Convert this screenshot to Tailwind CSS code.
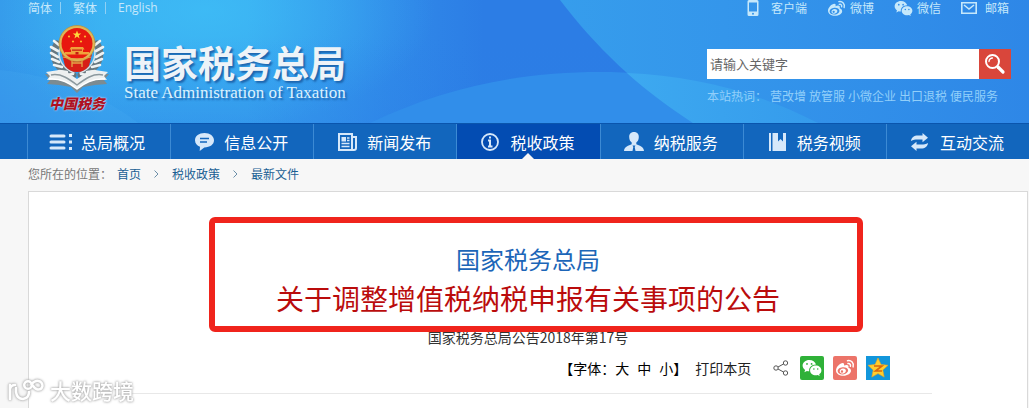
<!DOCTYPE html>
<html lang="zh-CN">
<head>
  <meta charset="UTF-8" />
  <meta name="viewport" content="width=device-width, initial-scale=1.0" />
  <title>国家税务总局</title>
  <script src="https://cdn.jsdelivr.net/npm/@tailwindcss/browser@4"></script>
</head>
<body class="flex min-h-screen flex-col bg-[#f7f7f7] font-['Noto_Sans_CJK_SC',sans-serif] text-xs text-[#333]">

  <!-- shared icon shapes -->
  <svg class="hidden" aria-hidden="true">
    <symbol id="wechat" viewBox="0 0 20 18">
      <path fill="currentColor" fill-rule="evenodd" d="M7.3 1C3.5 1 .6 3.500.6 6.600c0 1.800 1 3.300 2.500 4.400l-.7 2.200 2.500-1.300c.7.200 1.500.300 2.300.300-.6-3.700 2.600-6.700 6.800-6.600C13.300 3 10.600 1 7.300 1zM5 4a.9.9 0 1 1 0 1.800A.9.9 0 0 1 5 4zm4.600 0a.9.9 0 1 1 0 1.800.9.9 0 0 1 0-1.800z" />
      <path fill="currentColor" fill-rule="evenodd" d="M13.800 6.600c-3.200 0-5.700 2.100-5.700 4.800s2.500 4.800 5.700 4.800c.7 0 1.300-.1 1.900-.3l2 1.100-.5-1.800c1.300-.9 2.200-2.200 2.200-3.800 0-2.700-2.500-4.800-5.600-4.800zm-1.900 2.600a.8.8 0 1 1 0 1.600.8.8 0 0 1 0-1.600zm3.800 0a.8.8 0 1 1 0 1.600.8.8 0 0 1 0-1.600z" />
    </symbol>
    <symbol id="weibo" viewBox="0 0 20 18">
      <path fill="currentColor" fill-rule="evenodd" d="M13.400 8.700c.5-1.700-.1-2.900-2-2.800-.8 0-1.600.3-2.400.6.4-1.600 0-2.500-1.300-2.500C5 4 1 8 1 11.500 1 14.800 4.600 16.800 8.300 16.800c4.400 0 7.700-2.500 7.700-5 0-1.600-1.100-2.700-2.600-3.100zM8 15.400c-2.900.2-5.200-1.100-5.300-3.100-.2-1.900 2-3.800 4.900-4 2.900-.3 5.300 1.100 5.500 3 .1 2-2.200 3.900-5.100 4.100z" />
      <path fill="currentColor" fill-rule="evenodd" d="M8 9.500c-1.900.1-3.500 1.500-3.300 3.100.1 1.300 1.500 2.200 3.200 2 1.800-.2 3.200-1.600 3-3.100-.2-1.200-1.300-2.100-2.900-2zm-1 4.200a1.200 1.200 0 1 1 0-2.400 1.200 1.200 0 0 1 0 2.400z" />
      <path fill="none" stroke="currentColor" stroke-width="1.500" stroke-linecap="round" d="M12.500 1.700c3.800-.8 6.700 2.500 5.600 6.200M13 4.600c1.800-.4 2.900 1 2.400 2.600" />
    </symbol>
  </svg>

  <header class="relative h-[123px] overflow-hidden pr-[18px] pl-[28px]">
    <svg class="absolute inset-0 h-full w-full" viewBox="0 0 1029 123" preserveAspectRatio="none" aria-hidden="true">
      <defs>
        <linearGradient id="sky" x1="0" x2="1" y1="0" y2="0">
          <stop offset="0" stop-color="#3599ea" />
          <stop offset=".1" stop-color="#38a9ef" />
          <stop offset=".24" stop-color="#38a6ef" />
          <stop offset=".38" stop-color="#308ae9" />
          <stop offset=".47" stop-color="#2c7de5" />
          <stop offset="1" stop-color="#2c7de5" />
        </linearGradient>
        <radialGradient id="glow">
          <stop offset="0" stop-color="#40c4f8" stop-opacity=".65" />
          <stop offset="1" stop-color="#40c4f8" stop-opacity="0" />
        </radialGradient>
        <linearGradient id="shade" x1="0" x2="0" y1="0" y2="1">
          <stop offset=".3" stop-color="#2b7ee6" stop-opacity="0" />
          <stop offset="1" stop-color="#2b7ee6" stop-opacity=".35" />
        </linearGradient>
        <linearGradient id="wing" x1="0" x2="1" y1="0" y2="0">
          <stop offset="0" stop-color="#369dec" />
          <stop offset=".35" stop-color="#3496eb" />
          <stop offset="1" stop-color="#2e87e7" />
        </linearGradient>
        <linearGradient id="hill" x1="0" x2="1" y1="0" y2="0">
          <stop offset="0" stop-color="#3da9f0" />
          <stop offset="1" stop-color="#359bec" />
        </linearGradient>
      </defs>
      <path fill="url(#sky)" d="M0 0h1029v123H0z" />
      <ellipse fill="url(#glow)" cx="205" cy="10" rx="230" ry="120" />
      <path fill="url(#shade)" d="M0 0h1029v123H0z" />
      <path fill="#4db4f2" fill-opacity=".18" d="M0 70c50 5 98 22 138 53H0z" />
      <path fill="#318eea" d="M370 123c75-36 150-51 230-51 80 0 150 15 218 51z" />
      <path fill="url(#wing)" d="M560 0c35 46 78 88 133 123h336V0z" />
      <path fill="url(#hill)" d="M627 73c66 3 129 18 191 50H693c-24-16-46-32-66-50z" />
    </svg>

    <div class="relative flex h-4 items-center justify-between pr-0.5 leading-4 text-[#c5e8fb]">
      <nav class="flex items-center" aria-label="语言">
        <a href="#">简体</a>
        <span class="mx-2 h-3 w-px bg-[#8fd0f5]"></span>
        <a class="ml-1" href="#">繁体</a>
        <span class="mx-2 h-3 w-px bg-[#8fd0f5]"></span>
        <a class="ml-1 font-['Open_Sans',sans-serif]" href="#">English</a>
      </nav>
      <nav class="flex items-center gap-5" aria-label="快捷入口">
        <a class="flex items-center gap-3" href="#">
          <svg class="h-4 w-3" viewBox="0 0 12 16" aria-hidden="true"><path fill="currentColor" fill-rule="evenodd" d="M2 0h8q1.500 0 1.500 1.500v13q0 1.500-1.500 1.500H2Q.5 16 .5 14.500v-13Q.5 0 2 0zm0 2.500v9h8v-9zM6 12.800a1 1 0 1 0 0 2 1 1 0 0 0 0-2z" /></svg>
          客户端
        </a>
        <a class="flex items-center gap-1" href="#"><svg class="h-[17px] w-[19px]"><use href="#weibo" /></svg>微博</a>
        <a class="flex items-center gap-1" href="#"><svg class="h-[17px] w-[19px]"><use href="#wechat" /></svg>微信</a>
        <a class="flex items-center gap-2" href="#">
          <svg class="h-3 w-4" viewBox="0 0 16 12" fill="none" stroke="currentColor" stroke-width="1.600" aria-hidden="true"><path d="M.8.8h14.400v10.400H.8zM3 3l5 4 5-4" /></svg>
          邮箱
        </a>
      </nav>
    </div>

    <div class="relative flex items-start justify-between">
      <a class="flex pl-[17px]" href="#">
        <span class="mt-2 flex w-16 flex-col items-center">
          <svg class="h-[69px] w-16" viewBox="0 0 64 69" aria-hidden="true">
            <!-- wheat ears -->
            <g fill="none" stroke-linecap="round">
              <path stroke="#66777f" stroke-width="7" d="M12 20C5 32 11 45 28 51M52 20c7 12 1 25-16 31" />
              <path stroke="#eef2f3" stroke-width="2.600" d="M9 17l5 4M6 23l7 4M6 29l7 4M7 35l7 3M9 41l8 2M14 47l8 1M21 51l7-1M55 17l-5 4M58 23l-7 4M58 29l-7 4M57 35l-7 3M55 41l-8 2M50 47l-8 1M43 51l-7-1" />
              <path stroke="#dbe2e4" stroke-width="1.400" d="M15 24c-3 10 2 20 14 25M49 24c3 10-2 20-14 25" />
            </g>
            <path fill="#d71f17" d="M17 30h30l-3 12q-5 6-12 6t-12-6z" />
            <circle cx="32" cy="19.500" r="18" fill="#e0b755" stroke="#b68c3a" stroke-width=".7" />
            <circle cx="32" cy="19.500" r="15.500" fill="#e8180f" />
            <path fill="#ffd83c" d="M32 6.500l1.100 3h3.100l-2.500 1.900.9 3-2.600-1.800-2.600 1.800.9-3-2.500-1.900h3.100z" />
            <g fill="#ffb52e">
              <circle cx="24" cy="12.500" r="1.100" /><circle cx="40" cy="12.500" r="1.100" />
              <circle cx="28" cy="17.500" r="1.100" /><circle cx="36" cy="17.500" r="1.100" />
            </g>
            <path fill="#f1a13b" d="M26 23h12l1.500 2.500H38V28h6v2.500H20V28h6v-2.500h-1.500z" />
            <path fill="#c51d13" d="M27 25.500h10v1.200H27zM30.500 28h3v2.500h-3z" />
            <path fill="none" stroke="#e2a648" stroke-width="1.300" d="M18 33q14 4 28 0M27 35v8M37 35v8M27 39h10" />
            <!-- silver ribbon -->
            <path fill="#7c8b91" d="M0 50l12 0 20 9 20-9h12l-5 6 3 4-12 1-12 2-6 6-6-6-12-2-12-1 3-4z" />
            <path fill="#edf0f0" d="M1 48l13-2c6 0 12 5 18 9 6-4 12-9 18-9l13 2-4 4 3 4c-12-2-21 2-30 9-9-7-18-11-30-9l3-4z" />
            <path fill="none" stroke="#8c999e" stroke-width="1.500" d="M6 51c10-2 18 4 26 10 8-6 16-12 26-10" />
            <path fill="none" stroke="#fff" stroke-width="1.500" d="M4 55c12-1 21 4 28 10 7-6 16-11 28-10" />
          </svg>
          <span class="text-sm leading-5 font-black text-[#ad1022] italic [text-shadow:0_0_2px_#ffffff]">中国税务</span>
        </span>
        <span class="mt-[25px] ml-[15px] flex flex-col [text-shadow:2px_2px_2px_#1d65ae]">
          <span class="text-[37px] leading-[42px] font-bold text-[#edf3f8]">国家税务总局</span>
          <span class="font-['Liberation_Serif',serif] text-[17px] leading-5 text-[#dcf1fd]">State Administration of Taxation</span>
        </span>
      </a>

      <div class="mt-[33px] w-[304px]">
        <form class="flex h-[30px]" onsubmit="return false">
          <input id="keyword" type="text" aria-label="关键字" placeholder="请输入关键字" class="min-w-0 flex-1 bg-white px-[3px] text-[13px] text-[#333] outline-none placeholder:text-[#666]" />
          <button type="submit" aria-label="搜索" class="flex w-8 items-center justify-center bg-[#d9463b]">
            <svg class="h-[22px] w-[22px]" viewBox="0 0 22 22" fill="none" stroke="#fff" stroke-linecap="round" aria-hidden="true">
              <circle cx="8.500" cy="8.500" r="6.500" stroke-width="2" />
              <path stroke-width="1.300" d="M5 8.500A3.500 3.500 0 0 1 8.500 5" />
              <path stroke-width="3.200" d="M14 14l5 5" />
            </svg>
          </button>
        </form>
        <p class="mt-2 flex gap-[3px] leading-[18px] whitespace-nowrap text-[#91cffa]">
          <span>本站热词：</span>
          <a href="#">营改增</a><a href="#">放管服</a><a href="#">小微企业</a><a href="#">出口退税</a><a href="#">便民服务</a>
        </p>
      </div>
    </div>
  </header>

  <nav class="flex h-9 border-t border-[#0a55ad] bg-[#1266bd] pl-[27px] text-base text-white" aria-label="主导航">
    <a class="flex flex-1 items-center justify-center gap-2 border-l border-[#3c8ad4] pr-1 whitespace-nowrap" href="#">
      <svg class="h-5 w-6" viewBox="0 0 24 20" aria-hidden="true"><path fill="none" stroke="#d6e8fa" stroke-width="3" stroke-linecap="round" d="M2 4h13M2 10h13M2 16h13" /><path fill="#d6e8fa" d="M20 2h3v3h-3zM20 8.500h3v3h-3zM20 15h3v3h-3z" /></svg>
      总局概况
    </a>
    <a class="flex flex-1 items-center justify-center gap-2 border-l border-[#3c8ad4] pr-1 whitespace-nowrap" href="#">
      <svg class="h-5 w-6" viewBox="0 0 24 20" aria-hidden="true"><path fill="#d6e8fa" d="M12.500 1C7 1 3 4 3 8.300c0 3 2 5.400 5 6.500l-.3 4.200 4.600-3.600C18 15.400 22 12.500 22 8.300S18 1 12.500 1z" /><path stroke="#1266bd" stroke-width="1.300" d="M8 6.500h9M8 10h7" /></svg>
      信息公开
    </a>
    <a class="flex flex-1 items-center justify-center gap-2 border-l border-[#3c8ad4] pr-1 whitespace-nowrap" href="#">
      <svg class="h-5 w-6" viewBox="0 0 24 20" fill="none" stroke="#d6e8fa" stroke-width="2" aria-hidden="true"><path d="M4 2h13v16H4zM17 5h4v11q0 2-2 2h-3" /><path stroke-width="1.500" d="M6.500 11.500h8M6.500 14.500h8M12 6h2.500M12 8.500h2.500" /><path fill="#d6e8fa" stroke="none" d="M6.500 5H11v4.500H6.500z" /></svg>
      新闻发布
    </a>
    <a class="relative flex flex-1 items-center justify-center gap-2 border-l border-[#3c8ad4] bg-[#034cb2] pr-1 whitespace-nowrap" href="#" aria-current="page">
      <svg class="h-5 w-6" viewBox="0 0 24 20" fill="none" stroke="#d6e8fa" aria-hidden="true"><circle cx="12" cy="10" r="8" stroke-width="1.800" /><path stroke-width="2" d="M12 4.500v2M10 8.500h2V14M10 14.500h4.500" /></svg>
      税收政策
      <svg class="absolute bottom-0 left-1/2 h-1.5 w-3 -translate-x-1/2" viewBox="0 0 12 6" aria-hidden="true"><path fill="#f7f7f7" d="M6 0l6 6H0z" /></svg>
    </a>
    <a class="flex flex-1 items-center justify-center gap-2 border-l border-[#3c8ad4] pr-1 whitespace-nowrap" href="#">
      <svg class="h-5 w-6" viewBox="0 0 24 20" aria-hidden="true"><path fill="#d6e8fa" d="M12 0C8.800 0 7 2.200 7.200 5.200c.1 2.300 1 4.300 2.500 5.300v1.800c-3 1.500-7.500 2-7.700 6.700h8.500l.8-4-.8-1.500h3l-.8 1.500.8 4H22c-.2-4.700-4.700-5.200-7.700-6.700v-1.800c1.500-1 2.400-3 2.500-5.300C17 2.200 15.200 0 12 0z" /></svg>
      纳税服务
    </a>
    <a class="flex flex-1 items-center justify-center gap-2 border-l border-[#3c8ad4] pr-1 whitespace-nowrap" href="#">
      <svg class="h-5 w-6" viewBox="0 0 24 20" aria-hidden="true"><path fill="#d6e8fa" d="M4 1h2v18H4zM7.500 1H13v8.500L15.500 7 18 9.500V1h3v18H7.500z" /></svg>
      税务视频
    </a>
    <a class="flex flex-1 items-center justify-center gap-2 border-l border-[#3c8ad4] pr-1 whitespace-nowrap" href="#">
      <svg class="h-5 w-6" viewBox="0 0 24 20" aria-hidden="true"><path fill="#d6e8fa" d="M3 9c.3-3.500 3-5.500 7-5.500h4.500V1L20 5.700l-5.500 4.600V7.500H10C7 7.500 5 7.800 3 9zM20 11c-.3 3.500-3 5.500-7 5.500H8.500V19L3 14.300l5.500-4.600v2.800H13c3 0 5-.3 7-1.500z" /></svg>
      互动交流
    </a>
  </nav>

  <nav class="flex h-8 items-center pb-0.5 pl-[28px] text-[#1a5f94]" aria-label="当前位置">
    <span class="mr-[5px] text-[#777]">您所在的位置：</span>
    <a href="#">首页</a>
    <svg class="mx-[13px] h-2 w-[5px]" viewBox="0 0 5 8" fill="none" stroke="#6b8ea8" aria-hidden="true"><path d="M.5.500L4 4 .5 7.500" /></svg>
    <a href="#">税收政策</a>
    <svg class="mx-[13px] h-2 w-[5px]" viewBox="0 0 5 8" fill="none" stroke="#6b8ea8" aria-hidden="true"><path d="M.5.500L4 4 .5 7.500" /></svg>
    <a href="#">最新文件</a>
  </nav>

  <main class="relative mr-px ml-[28px] flex-1 border-x border-t border-[#d9d9d9] bg-white">
    <article class="mx-auto w-[81%] pt-12 text-center">
      <h1>
        <span class="block text-2xl leading-[38px] text-[#1c66b8]">国家税务总局</span>
        <span class="block text-[28px] leading-10 text-[#ba0c0c]">关于调整增值税纳税申报有关事项的公告</span>
      </h1>
      <p class="text-sm leading-[38px]">国家税务总局公告2018年第17号</p>

      <div class="flex h-[38px] items-start justify-end border-b border-[#e8e8e8] pr-[42px]">
        <div class="flex h-6 items-center text-sm text-black">
          <span>【字体：</span>
          <button type="button">大</button>
          <button type="button" class="mx-2">中</button>
          <button type="button">小</button>
          <span>】</span>
          <button type="button" class="ml-2 text-[#222]">打印本页</button>
        </div>
        <div class="ml-[22px] flex h-6 items-center gap-[9px]">
          <button type="button" aria-label="分享" class="mr-0.5">
            <svg class="h-4 w-4" viewBox="0 0 16 16" fill="none" stroke="#555" aria-hidden="true"><circle cx="3" cy="8" r="2.200" /><circle cx="12.500" cy="3" r="2.200" /><circle cx="12.500" cy="13" r="2.200" /><path d="M5 7l5.500-3M5 9l5.500 3" /></svg>
          </button>
          <button type="button" aria-label="分享到微信" class="flex h-6 w-6 items-center justify-center rounded-xs bg-[#2fb138] text-white">
            <svg class="h-[18px] w-5" aria-hidden="true"><use href="#wechat" /></svg>
          </button>
          <button type="button" aria-label="分享到微博" class="flex h-6 w-6 items-center justify-center rounded-xs bg-[#ec7469] text-white">
            <svg class="h-[18px] w-5" aria-hidden="true"><use href="#weibo" /></svg>
          </button>
          <button type="button" aria-label="分享到QQ空间" class="flex h-6 w-6 items-center justify-center bg-[#1296db]">
            <svg class="h-[22px] w-[22px]" viewBox="0 0 22 22" aria-hidden="true">
              <path fill="#ffce2e" stroke="#f0a51c" stroke-width=".6" stroke-linejoin="round" d="M11 1l3 6.500 7 .8-5.200 4.800 1.400 7-6.200-3.500-6.200 3.500 1.400-7L1 8.300l7-.8z" />
              <path fill="none" stroke="#d9660e" stroke-width="1.600" d="M7 9h8l-6.500 5H15" />
            </svg>
          </button>
        </div>
      </div>
    </article>

    <!-- red frame laid over the title -->
    <div class="pointer-events-none absolute top-[25px] left-1/2 ml-[-319px] h-[115px] w-[654px] rounded-md border-6 border-[#f0241c]"></div>
  </main>

  <!-- watermark -->
  <div class="absolute top-[376px] left-2 flex items-center text-white [filter:drop-shadow(0_0_1px_#aaaaaa)_drop-shadow(0_0_1px_#cccccc)]">
    <svg class="h-6 w-[38px]" viewBox="0 0 38 24" fill="none" stroke="currentColor" stroke-width="2.500" stroke-linecap="round" aria-hidden="true">
      <path d="M2 7v14M2 11q1-4 5-4M8 10v4q1 7 7 7 6-1 6-7" />
      <circle cx="20" cy="7" r="3.800" />
      <path d="M23.500 6q4-4 7-3 4 1 4 5-1 4-5 3.500-3-1-6-5.500" />
    </svg>
    <span class="ml-1 text-[21px] leading-7 font-medium">大数跨境</span>
  </div>

</body>
</html>
